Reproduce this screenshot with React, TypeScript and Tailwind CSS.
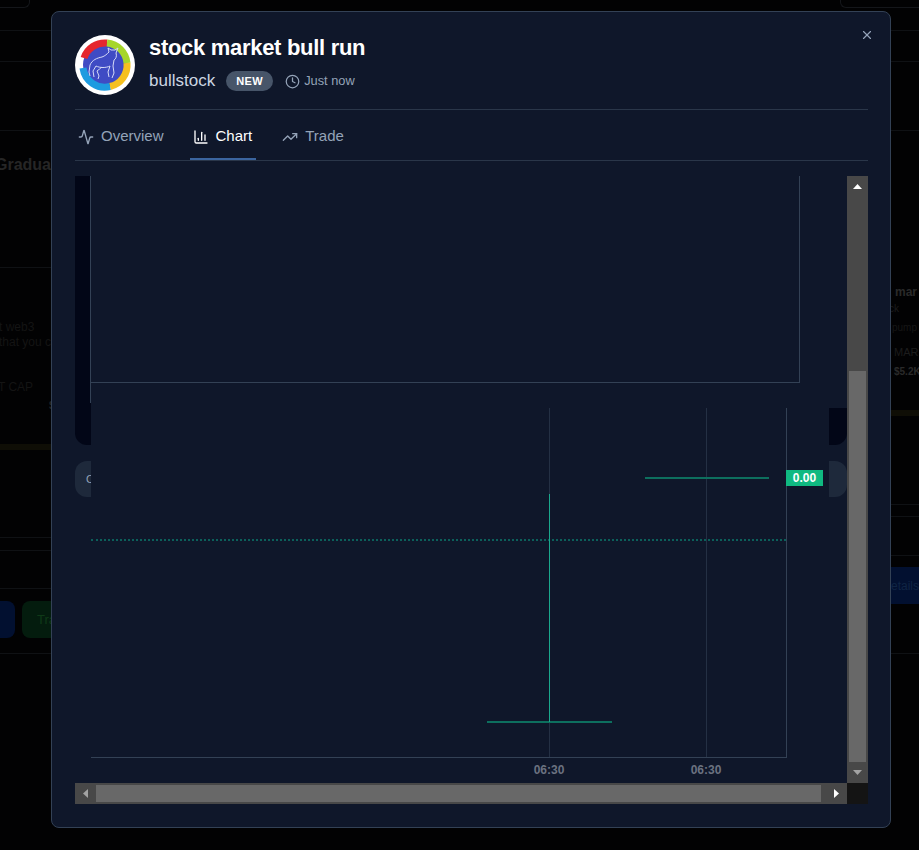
import { Activity, ChartColumn, Clock, TrendingUp, X } from 'lucide-react';

function Logo() {
  return (
    <svg width="60" height="60" viewBox="0 0 60 60" className="shrink-0">
      <circle cx="30" cy="30" r="30" fill="#ffffff" />
      <circle cx="30" cy="30" r="22" fill="#3f4bc4" />
      <g fill="none" strokeWidth="7">
        <path d="M9 23 A22 22 0 0 1 32 8" stroke="#e5262d" />
        <path d="M32 8 A22 22 0 0 1 52 28" stroke="#a6d62a" />
        <path d="M52 28 A22 22 0 0 1 35 51.5" stroke="#f5c020" />
        <path d="M35 51.5 A22 22 0 0 1 8 33" stroke="#1e9be0" />
      </g>
      <path
        d="M15 30 C17 25 22 23 27 22 C30 21 32 19 34 17 L33 13 L36 15 L40 15 L43 13 L41 18 C42 21 41 24 39 25 L38 31 L39 38 L37 43 M35 31 L33 37 L34 42 M27 32 C25 34 23 35 22 36 L24 41 L23 44 M21 31 L18 36 L19 42 M15 30 L14 37 L15 41 M21 31 C25 33 31 33 35 31"
        fill="none"
        stroke="#d5daf7"
        strokeWidth="1"
      />
    </svg>
  );
}

function Tab({ icon, label, active, wide }: { icon: React.ReactNode; label: string; active?: boolean; wide?: boolean }) {
  return (
    <div
      className={`flex h-[50px] items-center gap-[7px] border-b-2 pl-[3px] pt-[5px] text-[15px] ${wide ? 'pr-[4px]' : 'pr-[3px]'} ${
        active ? 'border-[#3b659f] text-white' : 'border-transparent text-[#94a3b8]'
      }`}
    >
      {icon}
      {label}
    </div>
  );
}

function ScrollArrow({ dir, active }: { dir: 'up' | 'down' | 'left' | 'right'; active?: boolean }) {
  const points = {
    up: '0,7 4.5,2 9,7',
    down: '0,2 4.5,7 9,2',
    left: '7,0 2,4.5 7,9',
    right: '2,0 7,4.5 2,9',
  }[dir];
  return (
    <div className="flex h-[21px] w-[21px] shrink-0 items-center justify-center">
      <svg width="9" height="9" viewBox="0 0 9 9">
        <polygon points={points} fill={active ? '#ffffff' : '#a3a3a3'} />
      </svg>
    </div>
  );
}

function Chart() {
  return (
    <div className="relative h-[607px] min-w-0 flex-1 overflow-hidden bg-[#0f172a]">
      {/* page behind the embed */}
      <div className="absolute left-0 top-0 h-[269px] w-[40px] rounded-bl-xl bg-[#020617]" />
      <div className="absolute left-[732px] top-[232px] h-[37px] w-[40px] rounded-br-xl bg-[#020617]" />
      <div className="absolute left-0 top-[285px] flex h-[36px] w-[40px] items-center rounded-l-xl bg-[#1e293b] pl-[11px] text-[11px] text-[#94a3b8]">
        C
      </div>
      <div className="absolute left-[732px] top-[285px] h-[36px] w-[40px] rounded-r-xl bg-[#1e293b]" />

      {/* upper frame */}
      <div className="absolute left-[16px] top-0 h-[232px] w-[756px] bg-[#0f172a]" />
      <div className="absolute left-[15px] top-0 h-[207px] w-[710px] border-x border-b border-[#334155]" />
      <div className="absolute left-[15px] top-[207px] h-[20px] w-[1px] bg-[#334155]" />

      {/* lower frame */}
      <div className="absolute left-[16px] top-[232px] h-[375px] w-[738px] bg-[#0f172a]" />
      <div className="absolute left-[16px] top-[232px] h-[350px] w-[696px] border-b border-r border-[#334155]" />
      <div className="absolute left-[474px] top-[232px] h-[349px] w-[1px] bg-[#243044]" />
      <div className="absolute left-[631px] top-[232px] h-[349px] w-[1px] bg-[#243044]" />
      <div className="absolute left-[16px] top-[363px] w-[695px] border-t-2 border-dotted border-[#0c5f5a]" />
      <div className="absolute left-[570px] top-[301px] h-[2px] w-[124px] bg-[#0d6f5e]" />
      <div className="absolute left-[412px] top-[545px] h-[2px] w-[125px] bg-[#0d6f5e]" />
      <div className="absolute left-[474px] top-[318px] h-[228px] w-[1px] bg-[#1aa88c]" />
      <div className="absolute left-[711px] top-[294px] flex h-[16px] w-[37px] items-center justify-center bg-[#10b981] text-[12px] font-bold text-white">
        0.00
      </div>
      <div className="absolute left-[474px] top-[585px] -translate-x-1/2 text-[12px] font-bold text-[#6b7280]">06:30</div>
      <div className="absolute left-[631px] top-[585px] -translate-x-1/2 text-[12px] font-bold text-[#6b7280]">06:30</div>
    </div>
  );
}

function Modal() {
  return (
    <div className="absolute left-[51px] top-[11px] h-[817px] w-[840px] rounded-lg border border-[#334155] bg-[#0f172a] pl-[23px] pr-[22px] pt-[23px]">
      <X size={14} className="absolute right-[16px] top-[16px] text-[#94a3b8]" />
      <div className="flex h-[75px] items-start gap-[14px] border-b border-[#2a3649]">
        <Logo />
        <div>
          <div className="text-[22px] font-bold leading-[26px] tracking-[-0.3px] text-white">stock market bull run</div>
          <div className="mt-[10px] flex h-[20px] items-center">
            <span className="text-[17px] text-[#cbd5e1]">bullstock</span>
            <span className="ml-[11px] flex h-[20px] w-[47px] items-center justify-center rounded-full bg-[#475569] text-[11px] font-bold tracking-[0.4px] text-white">
              NEW
            </span>
            <Clock size={15} className="ml-[12px] text-[#94a3b8]" />
            <span className="ml-[4px] text-[12.8px] text-[#94a3b8]">Just now</span>
          </div>
        </div>
      </div>
      <div className="flex gap-[23px] border-b border-[#2a3649]">
        <Tab icon={<Activity size={16} />} label="Overview" />
        <Tab icon={<ChartColumn size={16} />} label="Chart" active wide />
        <Tab icon={<TrendingUp size={16} />} label="Trade" />
      </div>
      <div className="mt-[15px] flex h-[628px] w-[793px] flex-col">
        <div className="flex min-h-0 flex-1">
          <Chart />
          <div className="flex h-[607px] w-[21px] shrink-0 flex-col bg-[#484848]">
            <ScrollArrow dir="up" active />
            <div className="h-[174px]" />
            <div className="mx-[2px] h-[391px] bg-[#686868]" />
            <ScrollArrow dir="down" />
          </div>
        </div>
        <div className="flex h-[21px] shrink-0">
          <div className="flex h-[21px] w-[772px] items-center bg-[#484848]">
            <ScrollArrow dir="left" />
            <div className="h-[17px] w-[725px] bg-[#686868]" />
            <div className="ml-auto">
              <ScrollArrow dir="right" active />
            </div>
          </div>
          <div className="h-[21px] w-[21px] bg-[#141414]" />
        </div>
      </div>
    </div>
  );
}

function Rule({ mt }: { mt: string }) {
  return <div className={`h-[1px] bg-[#0f1114] ${mt}`} />;
}

function LeftPage() {
  return (
    <div className="w-[51px] overflow-hidden">
      <Rule mt="mt-[22px]" />
      <Rule mt="mt-[30px]" />
      <Rule mt="mt-[68px]" />
      <div className="mt-[24px] ml-[-5px] w-[80px] text-[16px] font-bold leading-[20px] text-[#262626]">Gradua</div>
      <Rule mt="mt-[92px]" />
      <div className="mt-[52px] ml-[-1px] w-[80px] text-[12px] leading-[15px] text-[#141414]">
        <div>t web3</div>
        <div>that you ca</div>
      </div>
      <div className="mt-[30px] ml-[-2px] w-[80px] text-[12px] leading-[15px] text-[#141414]">T CAP</div>
      <div className="mt-[3px] ml-[49px] text-[11px] font-bold leading-[14px] text-[#262626]">$</div>
      <div className="mt-[32px] h-[6px] bg-[#0f0e06]" />
      <Rule mt="mt-[87px]" />
      <Rule mt="mt-[12px]" />
      <Rule mt="mt-[37px]" />
      <div className="mt-[12px] flex gap-[7px]">
        <div className="h-[37px] w-[15px] shrink-0 rounded-r-lg bg-[#021030]" />
        <div className="flex h-[37px] w-[60px] shrink-0 items-center rounded-lg bg-[#041c0e] pl-[15px] text-[13px] text-[#0f3a18]">
          Tra
        </div>
      </div>
      <Rule mt="mt-[15px]" />
    </div>
  );
}

function RightPage() {
  return (
    <div className="w-[28px] overflow-hidden">
      <Rule mt="mt-[22px]" />
      <Rule mt="mt-[30px]" />
      <Rule mt="mt-[68px]" />
      <div className="mt-[154px] ml-[4px] w-[60px] text-[12px] font-bold leading-[14px] text-[#2a2a2a]">mar</div>
      <div className="mt-[3px] ml-[-2px] w-[60px] text-[10px] leading-[13px] text-[#1c1c1c]">ck</div>
      <div className="mt-[6px] ml-[1px] w-[60px] text-[10px] leading-[13px] text-[#161616]">pump</div>
      <div className="mt-[12px] ml-[3px] w-[60px] text-[11px] leading-[13px] text-[#1c1c1c]">MAR</div>
      <div className="mt-[6px] ml-[3px] w-[60px] text-[10px] font-bold leading-[13px] text-[#2a2a2a]">$5.2K</div>
      <div className="mt-[32px] h-[6px] bg-[#0f0e06]" />
      <Rule mt="mt-[88px]" />
      <Rule mt="mt-[11px]" />
      <Rule mt="mt-[38px]" />
      <div className="mt-[11px] flex h-[37px] w-[60px] items-center bg-[#021030] text-[12px] text-[#0f2444]">
        etails
      </div>
      <Rule mt="mt-[49px]" />
    </div>
  );
}

export default function App() {
  return (
    <div className="relative h-[850px] w-[919px] overflow-hidden bg-[#020203] font-['Liberation_Sans',sans-serif]">
      <div className="flex h-[8px] justify-between">
        <div className="w-[30px] rounded-br-md border-b border-r border-[#14161a]" />
        <div className="w-[79px] rounded-bl-md border-b border-l border-[#14161a]" />
      </div>
      <div className="flex justify-between">
        <LeftPage />
        <RightPage />
      </div>
      <Modal />
    </div>
  );
}
